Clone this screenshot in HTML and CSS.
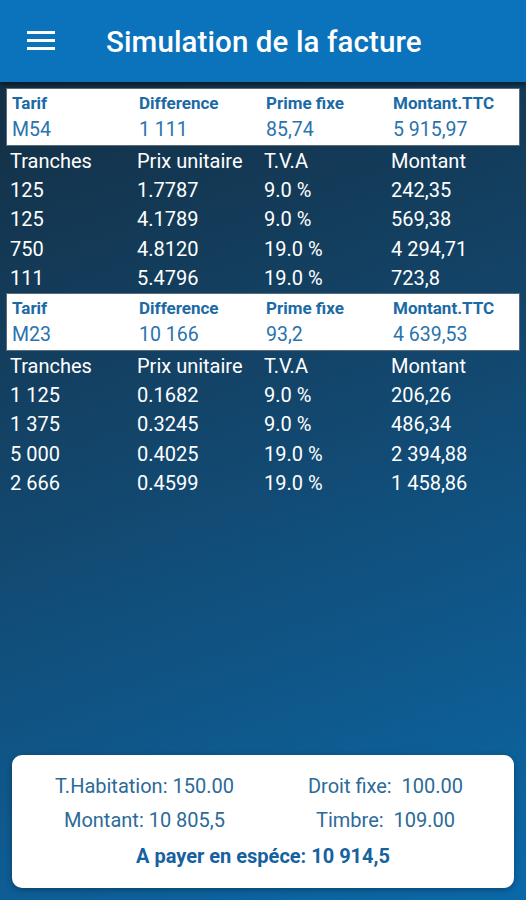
FILE: index.html
```html
<!DOCTYPE html>
<html lang="fr">
<head>
  <meta charset="UTF-8">
  <meta name="viewport" content="width=device-width, initial-scale=1.0">
  <title>Simulation de la facture</title>
  <link rel="stylesheet" href="styles.css">
</head>
<body>
  <!-- Barre du haut -->
  <header class="app-bar">
    <svg class="menu-icon" width="28" height="20" viewBox="0 0 28 20">
      <rect x="0" y="1" width="28" height="3" fill="#fff"/>
      <rect x="0" y="9" width="28" height="3" fill="#fff"/>
      <rect x="0" y="17" width="28" height="3" fill="#fff"/>
    </svg>
    <h1 class="app-title">Simulation de la facture</h1>
  </header>

  <main class="content">
    <!-- Tarif M54 -->
    <section class="tarif-box">
      <div class="grid">
        <span class="label">Tarif</span>
        <span class="label">Difference</span>
        <span class="label">Prime fixe</span>
        <span class="label">Montant.TTC</span>
        <span class="value">M54</span>
        <span class="value">1 111</span>
        <span class="value">85,74</span>
        <span class="value">5 915,97</span>
      </div>
    </section>
    <div class="tranches grid">
      <span>Tranches</span><span>Prix unitaire</span><span>T.V.A</span><span>Montant</span>
      <span>125</span><span>1.7787</span><span>9.0 %</span><span>242,35</span>
      <span>125</span><span>4.1789</span><span>9.0 %</span><span>569,38</span>
      <span>750</span><span>4.8120</span><span>19.0 %</span><span>4 294,71</span>
      <span>111</span><span>5.4796</span><span>19.0 %</span><span>723,8</span>
    </div>

    <!-- Tarif M23 -->
    <section class="tarif-box">
      <div class="grid">
        <span class="label">Tarif</span>
        <span class="label">Difference</span>
        <span class="label">Prime fixe</span>
        <span class="label">Montant.TTC</span>
        <span class="value">M23</span>
        <span class="value">10 166</span>
        <span class="value">93,2</span>
        <span class="value">4 639,53</span>
      </div>
    </section>
    <div class="tranches grid">
      <span>Tranches</span><span>Prix unitaire</span><span>T.V.A</span><span>Montant</span>
      <span>1 125</span><span>0.1682</span><span>9.0 %</span><span>206,26</span>
      <span>1 375</span><span>0.3245</span><span>9.0 %</span><span>486,34</span>
      <span>5 000</span><span>0.4025</span><span>19.0 %</span><span>2 394,88</span>
      <span>2 666</span><span>0.4599</span><span>19.0 %</span><span>1 458,86</span>
    </div>
  </main>

  <!-- Totaux -->
  <footer class="total-card">
    <div class="total-row">
      <span>T.Habitation: 150.00</span>
      <span>Droit fixe:&nbsp; 100.00</span>
    </div>
    <div class="total-row">
      <span>Montant: 10 805,5</span>
      <span>Timbre:&nbsp; 109.00</span>
    </div>
    <p class="total-pay">A payer en espéce: 10 914,5</p>
  </footer>
</body>
</html>
```

FILE: styles.css
```css
body {
  margin: 0;
  width: 526px;
  height: 900px;
  font-family: Roboto, 'Liberation Sans', sans-serif;
  background: linear-gradient(160deg, #142b3d 0%, #13456a 45%, #0b69a9 100%);
  display: flex;
  flex-direction: column;
  overflow: hidden;
}

.app-bar {
  height: 82px;
  background-color: #0b72bc;
  display: flex;
  align-items: center;
  padding-left: 27px;
  box-shadow: 0 3px 4px rgba(0, 0, 0, 0.45);
}

.menu-icon {
  margin-top: -2px;
}

.app-title {
  margin: 2px 0 0 51px;
  font-size: 29.5px;
  font-weight: 500;
  color: #fff;
  letter-spacing: 0.1px;
}

.content {
  flex: 1;
  padding: 6px 6px 0 6px;
}

.grid {
  display: grid;
  grid-template-columns: 127px 127px 127px 1fr;
}

.tarif-box {
  background-color: #fff;
  border: 1px solid #5b6b78;
  padding: 3px 0 0 5px;
  box-sizing: border-box;
  height: 58px;
}

.label {
  font-size: 17px;
  font-weight: 700;
  color: #1b6aa5;
  line-height: 23px;
}

.value {
  font-size: 19.5px;
  color: #2a73ad;
  line-height: 29px;
}

.tranches {
  padding: 1px 0 0 4px;
  color: #fff;
  font-size: 20px;
  line-height: 29.2px;
}

.total-card {
  margin: 0 12px 12px 12px;
  height: 133px;
  box-sizing: border-box;
  background-color: #fff;
  border-radius: 10px;
  padding: 14px 0 0 0;
  color: #2c6a98;
  font-size: 20px;
  box-shadow: 0 2px 6px rgba(0, 0, 0, 0.3);
}

.total-row {
  display: grid;
  grid-template-columns: 1fr 1fr;
  text-align: center;
  line-height: 34px;
  padding: 0 8px 0 12px;
}

.total-pay {
  margin: 4px 0 0 0;
  text-align: center;
  font-weight: 700;
  color: #1661a0;
  line-height: 30px;
}
```
